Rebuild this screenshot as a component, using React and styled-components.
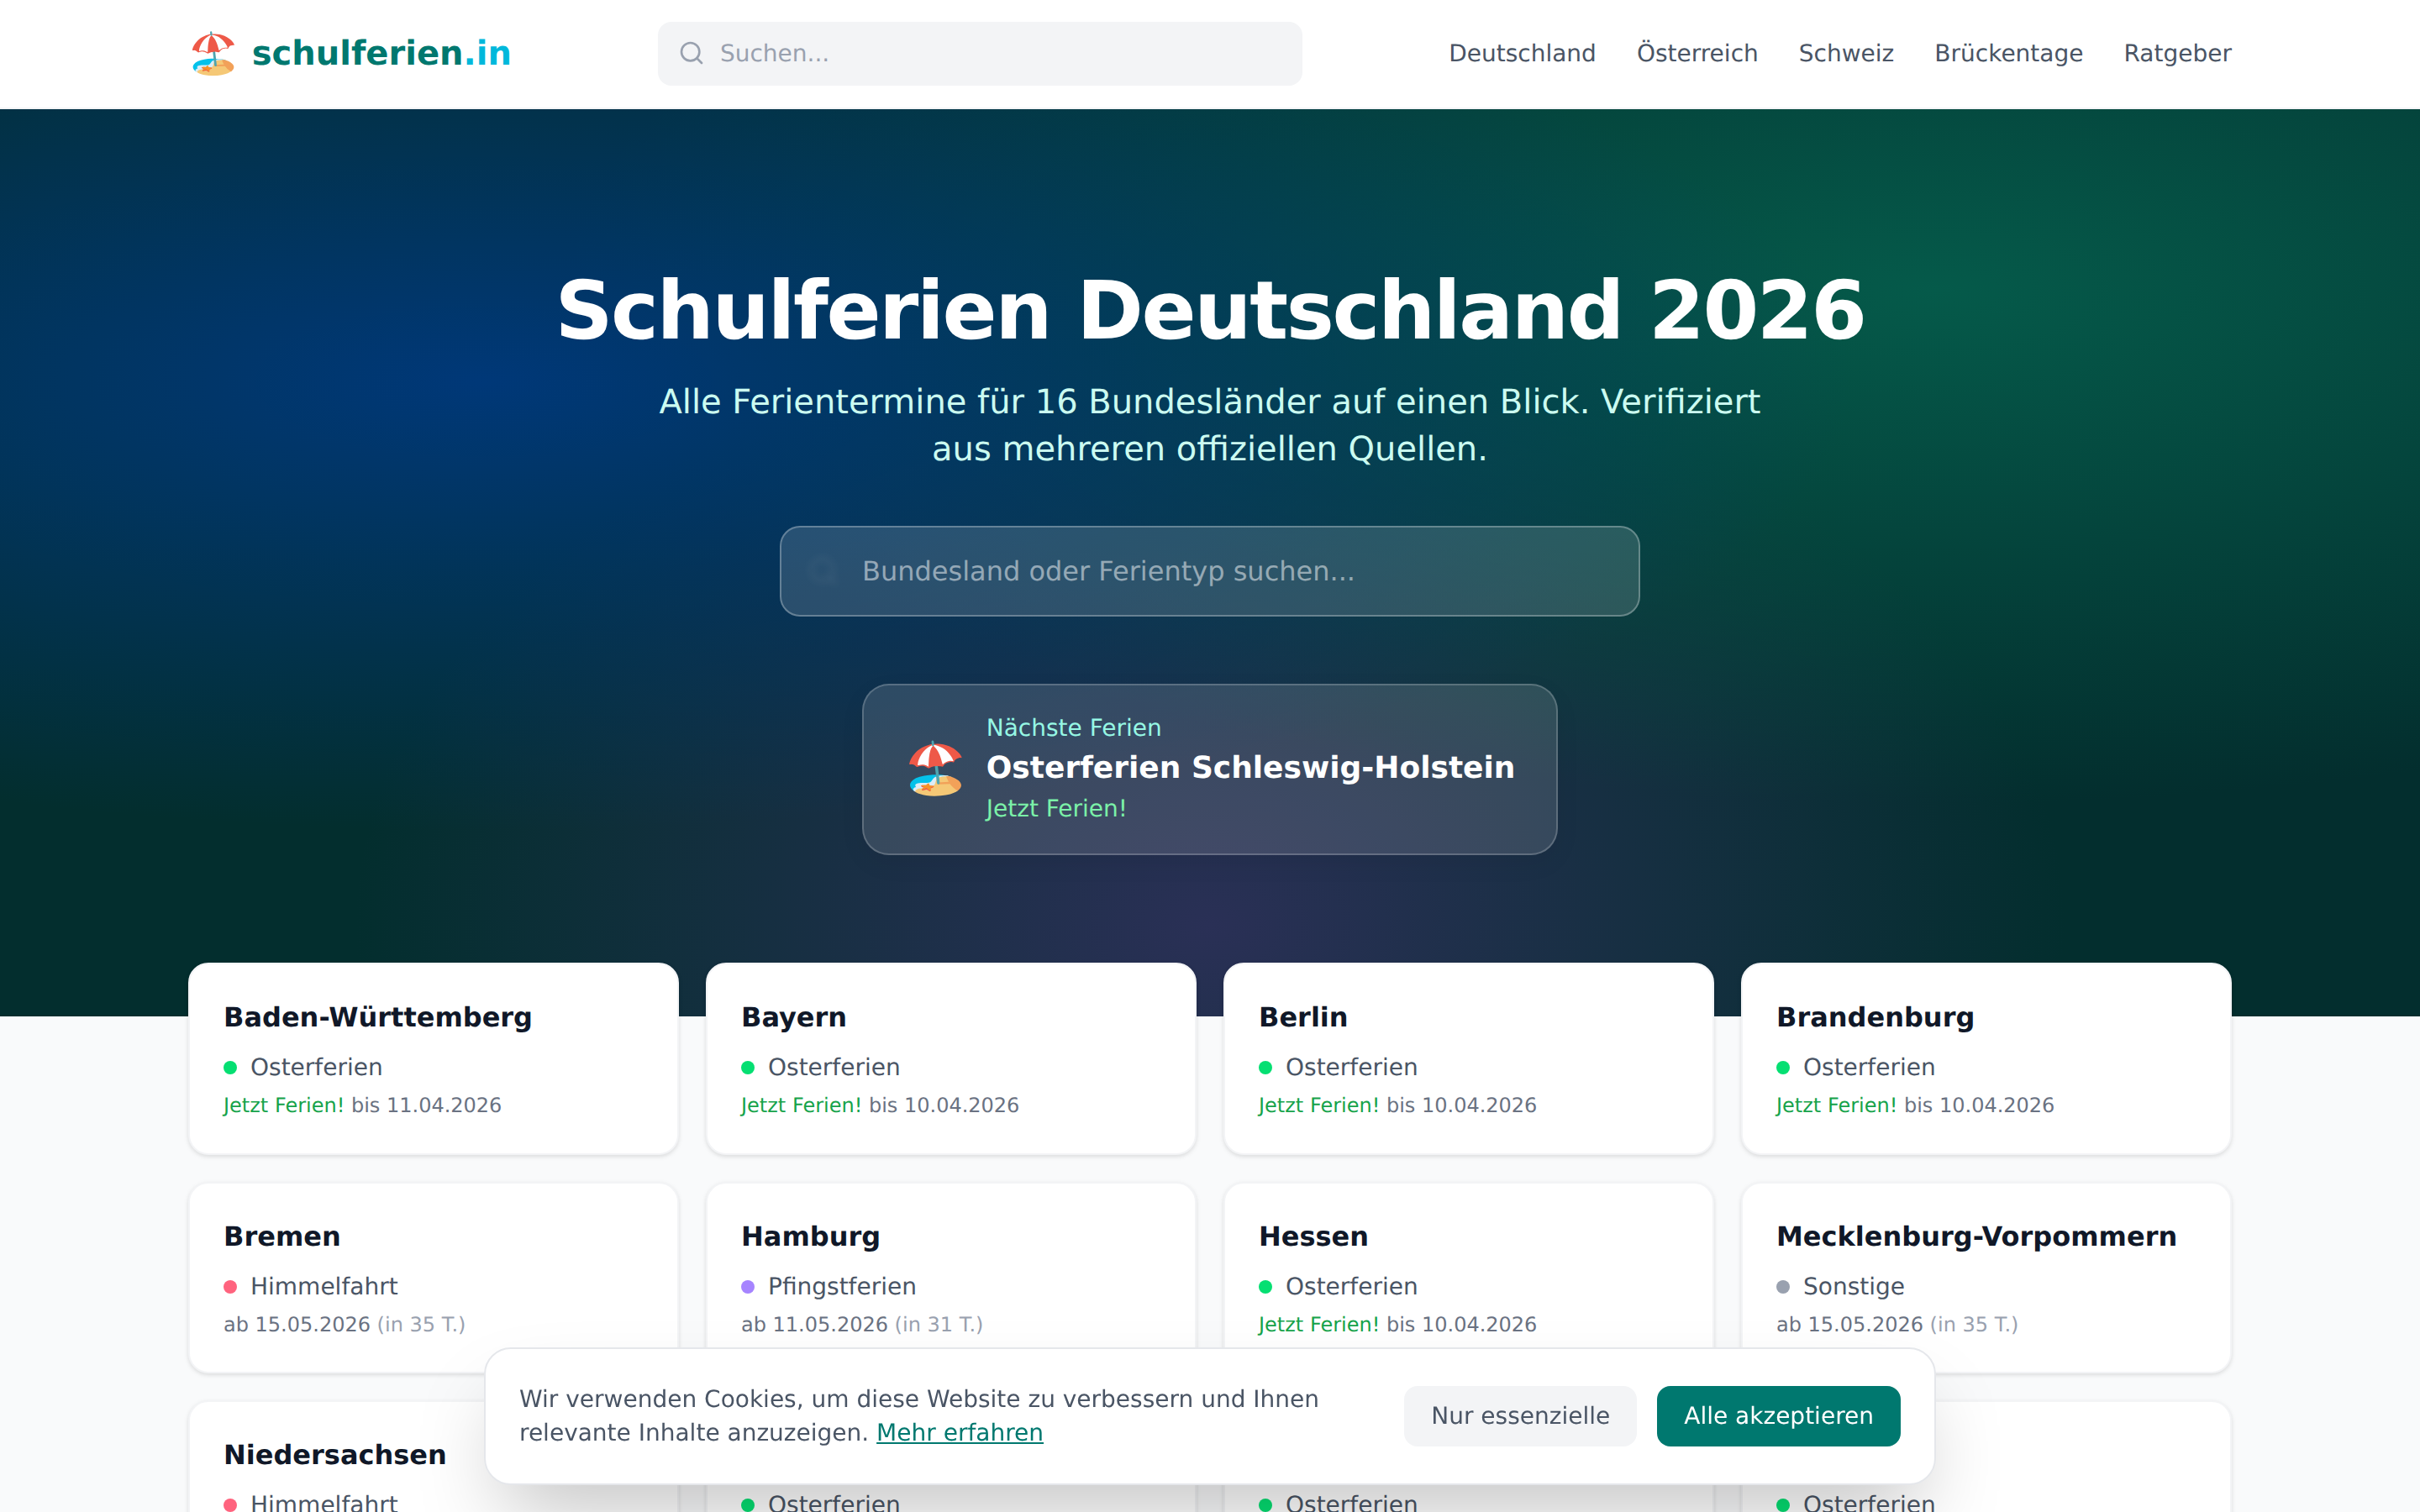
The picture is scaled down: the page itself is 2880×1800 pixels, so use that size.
import React from 'react';
import styled, { createGlobalStyle } from 'styled-components';

const font = '"DejaVu Sans", sans-serif';

const Global = createGlobalStyle`
  html, body {
    margin: 0;
    padding: 0;
    background: #f9fafb;
    font-family: ${font};
    text-rendering: geometricPrecision;
  }
  * { box-sizing: border-box; }
  body { overflow-x: hidden; }
`;

const Header = styled.header`
  background: #fff;
  height: 130px;
  border-bottom: 2px solid #f3f4f6;
  display: flex;
  justify-content: center;
`;
const HeaderInner = styled.div`
  width: 2432px;
  display: flex;
  align-items: center;
  justify-content: space-between;
`;
const Logo = styled.a`
  display: flex;
  align-items: center;
  gap: 16px;
  font-size: 40px;
  font-weight: 700;
  color: #00786f;
`;
const LogoEmoji = styled.span`
  font-size: 48px;
  line-height: 1;
`;
const Accent = styled.span`
  color: #00b8db;
`;
const HeaderSearch = styled.div`
  width: 767px;
  height: 76px;
  margin-left: 174px;
  border-radius: 16px;
  background: #f3f4f6;
  display: flex;
  align-items: center;
  gap: 18px;
  padding: 0 24px 2px;
  color: #99a1af;
  font-size: 28px;
`;
const Nav = styled.nav`
  margin-left: auto;
  display: flex;
  gap: 48px;
  padding-bottom: 2px;
`;
const NavLink = styled.a`
  font-size: 28px;
  color: #4a5565;
`;

const Hero = styled.section`
  height: 1080px;
  padding-top: 192px;
  text-align: center;
  background:
    radial-gradient(ellipse at 20% 30%, rgb(0, 56, 120), transparent 50%),
    radial-gradient(ellipse at 80% 20%, rgb(5, 90, 74), transparent 50%),
    radial-gradient(ellipse at 50% 90%, rgb(42, 48, 86), transparent 50%),
    #032e2e;
`;
const Title = styled.h1`
  margin: 0;
  font-size: 96px;
  line-height: 96px;
  letter-spacing: -2.4px;
  font-weight: 700;
  color: #fff;
`;
const Subtitle = styled.p`
  margin: 33px auto 0;
  width: 1344px;
  font-size: 40px;
  line-height: 56px;
  color: #cbfbf1;
`;
const HeroSearch = styled.div`
  margin: 63px auto 0;
  width: 1024px;
  height: 108px;
  border-radius: 24px;
  background: rgba(255, 255, 255, 0.14);
  border: 2px solid rgba(255, 255, 255, 0.28);
  display: flex;
  align-items: center;
  gap: 26px;
  padding-left: 30px;
  font-size: 32px;
  color: rgba(255, 255, 255, 0.5);
`;
const GhostIcon = styled.svg`
  filter: blur(5px);
`;
const NextCard = styled.div`
  margin: 80px auto 0;
  width: 828px;
  height: 204px;
  border-radius: 32px;
  background: rgba(255, 255, 255, 0.13);
  border: 2px solid rgba(255, 255, 255, 0.2);
  box-shadow: 0 10px 30px rgba(0, 0, 0, 0.06);
  display: flex;
  align-items: center;
  gap: 23px;
  padding: 0 48px 2px;
  text-align: left;
`;
const NextEmoji = styled.span`
  font-size: 60px;
  line-height: 1;
`;
const NextBody = styled.div`
  display: flex;
  flex-direction: column;
  white-space: nowrap;
`;
const NextLabel = styled.span`
  font-size: 28px;
  line-height: 40px;
  color: #96f7e4;
`;
const NextName = styled.span`
  font-size: 36px;
  line-height: 56px;
  font-weight: 700;
  color: #fff;
`;
const NextStatus = styled.span`
  font-size: 28px;
  line-height: 40px;
  color: #7bf1a8;
`;

const Main = styled.main`
  width: 2432px;
  margin: -64px auto 0;
  display: grid;
  grid-template-columns: repeat(4, 1fr);
  gap: 32px;
  position: relative;
  padding-bottom: 64px;
`;
const Card = styled.article`
  height: 228.5px;
  background: #fff;
  border: 2px solid #f3f4f6;
  border-radius: 24px;
  padding: 39px 40px;
  box-shadow: 0 2px 6px rgba(0, 0, 0, 0.08), 0 2px 4px rgba(0, 0, 0, 0.05);
`;
const CardTitle = styled.h3`
  margin: 0;
  font-size: 32px;
  line-height: 48px;
  font-weight: 700;
  color: #101828;
`;
const TypeRow = styled.div`
  margin-top: 16px;
  display: flex;
  align-items: center;
  gap: 16px;
  font-size: 28px;
  line-height: 40px;
  color: #4a5565;
`;
const Dot = styled.span`
  width: 16px;
  height: 16px;
  border-radius: 50%;
  background: ${p => p.$color};
`;
const DateLine = styled.div`
  margin-top: 5px;
  font-size: 24px;
  line-height: 40px;
  color: #6a7282;
`;
const Now = styled.span`
  color: #16a34a;
`;
const Days = styled.span`
  color: #99a1af;
`;

const Cookie = styled.div`
  position: fixed;
  left: 50%;
  bottom: 32px;
  transform: translateX(-50%);
  width: 1728px;
  height: 164px;
  background: #fff;
  border-radius: 32px;
  border: 2px solid #e5e7eb;
  box-shadow: 0 50px 100px -24px rgba(0, 0, 0, 0.25);
  display: flex;
  align-items: center;
  gap: 24px;
  padding: 0 40px;
`;
const CookieText = styled.p`
  margin: 0;
  flex: 1;
  font-size: 28px;
  line-height: 40px;
  color: #4a5565;
`;
const CookieLink = styled.a`
  color: #00786f;
  text-decoration: underline;
`;
const Button = styled.button`
  height: 72px;
  padding: 0 32px 2px;
  border: 0;
  border-radius: 16px;
  font-family: inherit;
  font-size: 28px;
  text-rendering: geometricPrecision;
  background: ${p => (p.$primary ? '#00786f' : '#f3f4f6')};
  color: ${p => (p.$primary ? '#fff' : '#4a5565')};
`;

const colors = { Osterferien: '#05df72', Himmelfahrt: '#ff637e', Pfingstferien: '#a684ff', Sonstige: '#99a1af' };

const states = [
  ['Baden-Württemberg', 'Osterferien', 'bis 11.04.2026', true],
  ['Bayern', 'Osterferien', 'bis 10.04.2026', true],
  ['Berlin', 'Osterferien', 'bis 10.04.2026', true],
  ['Brandenburg', 'Osterferien', 'bis 10.04.2026', true],
  ['Bremen', 'Himmelfahrt', 'ab 15.05.2026', false, 'in 35 T.'],
  ['Hamburg', 'Pfingstferien', 'ab 11.05.2026', false, 'in 31 T.'],
  ['Hessen', 'Osterferien', 'bis 10.04.2026', true],
  ['Mecklenburg-Vorpommern', 'Sonstige', 'ab 15.05.2026', false, 'in 35 T.'],
  ['Niedersachsen', 'Himmelfahrt', 'ab 15.05.2026', false, 'in 35 T.'],
  ['Nordrhein-Westfalen', 'Osterferien', 'bis 11.04.2026', true],
  ['Rheinland-Pfalz', 'Osterferien', 'bis 10.04.2026', true],
  ['Saarland', 'Osterferien', 'bis 10.04.2026', true],
];

const SearchIcon = () => (
  <svg width="32" height="32" viewBox="0 0 24 24" fill="none" stroke="#99a1af" strokeWidth="2" strokeLinecap="round" strokeLinejoin="round">
    <circle cx="11" cy="11" r="8" />
    <path d="m21 21-4.3-4.3" />
  </svg>
);

export default function App() {
  return (
    <>
      <Global />
      <Header>
        <HeaderInner>
          <Logo>
            <LogoEmoji>🏖️</LogoEmoji>
            <span>schulferien<Accent>.in</Accent></span>
          </Logo>
          <HeaderSearch><SearchIcon />Suchen...</HeaderSearch>
          <Nav>
            {['Deutschland', 'Österreich', 'Schweiz', 'Brückentage', 'Ratgeber'].map(n => <NavLink key={n}>{n}</NavLink>)}
          </Nav>
        </HeaderInner>
      </Header>
      <Hero>
        <Title>Schulferien Deutschland 2026</Title>
        <Subtitle>Alle Ferientermine für 16 Bundesländer auf einen Blick. Verifiziert aus mehreren offiziellen Quellen.</Subtitle>
        <HeroSearch>
          <GhostIcon width="40" height="40" viewBox="0 0 24 24" fill="none" stroke="rgba(255,255,255,0.08)" strokeWidth="2" strokeLinecap="round">
            <circle cx="11" cy="11" r="8" />
            <path d="m21 21-4.3-4.3" />
          </GhostIcon>
          Bundesland oder Ferientyp suchen...
        </HeroSearch>
        <NextCard>
          <NextEmoji>🏖️</NextEmoji>
          <NextBody>
            <NextLabel>Nächste Ferien</NextLabel>
            <NextName>Osterferien Schleswig-Holstein</NextName>
            <NextStatus>Jetzt Ferien!</NextStatus>
          </NextBody>
        </NextCard>
      </Hero>
      <Main>
        {states.map(([name, type, date, now, days]) => (
          <Card key={name}>
            <CardTitle>{name}</CardTitle>
            <TypeRow><Dot $color={colors[type]} />{type}</TypeRow>
            <DateLine>
              {now && <Now>Jetzt Ferien! </Now>}{date}{days && <Days> ({days})</Days>}
            </DateLine>
          </Card>
        ))}
      </Main>
      <Cookie>
        <CookieText>Wir verwenden Cookies, um diese Website zu verbessern und Ihnen relevante Inhalte anzuzeigen. <CookieLink>Mehr erfahren</CookieLink></CookieText>
        <Button>Nur essenzielle</Button>
        <Button $primary>Alle akzeptieren</Button>
      </Cookie>
    </>
  );
}
